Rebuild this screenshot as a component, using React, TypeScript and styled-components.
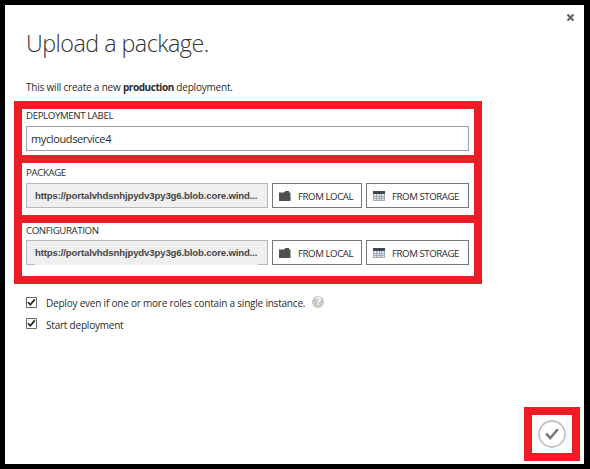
import React from "react";
import styled, { createGlobalStyle } from "styled-components";

const RED = "#ee1c24";

const GlobalStyle = createGlobalStyle`
  *, *::before, *::after { box-sizing: border-box; }
  body { margin: 0; background: #000; overflow: hidden; }
  button, input { margin: 0; font: inherit; color: inherit; letter-spacing: inherit; }
`;

const Dialog = styled.main`
  position: relative;
  width: 590px;
  height: 469px;
  padding: 22px 4px 0 21px;
  border: solid #000;
  border-width: 5px 6px 5px 5px;
  display: flex;
  flex-direction: column;
  background: #fff;
  color: #2b2b2b;
  font: 400 10px/12px "Open Sans", sans-serif;
  white-space: nowrap;
`;

const CloseButton = styled.button`
  position: absolute;
  top: 8px;
  right: 9px;
  width: 9px;
  height: 9px;
  padding: 0;
  border: 0;
  background: none;
  svg { display: block; }
`;

const Title = styled.h1`
  margin: 0 0 21px;
  font-size: 23.3px;
  font-weight: 300;
  line-height: 32px;
  letter-spacing: -0.52px;
  color: #333;
`;

const Intro = styled.p`
  margin: 0 0 7px;
  line-height: 14px;
  letter-spacing: -0.2px;
`;

const Strong = styled.strong`
  font-weight: 700;
  letter-spacing: -0.43px;
`;

const Sections = styled.div`
  width: 468px;
  height: 183px;
  margin-left: -12px;
  padding: 8px;
  display: grid;
  grid-template-rows: 46px 52px 53px;
  row-gap: 8px;
  background: ${RED};
`;

const Section = styled.section<{ $top: number; $gap: number }>`
  padding: ${(p) => p.$top}px 5px 0 4px;
  display: flex;
  flex-direction: column;
  gap: ${(p) => p.$gap}px;
  background: #fff;
`;

const Label = styled.label`
  height: 12px;
  font-size: 9.7px;
  line-height: 13px;
  letter-spacing: -0.39px;
`;

const TextInput = styled.input`
  width: 100%;
  height: 25px;
  padding: 0 4px;
  border: 1px solid #a0a0a0;
  border-radius: 0;
  background: #fff;
  font-size: 11px;
  letter-spacing: -0.38px;
  outline: none;
`;

const FileRow = styled.div`
  display: flex;
  height: 25px;
  gap: 4px;
`;

const FilePath = styled.div<{ $openBottom?: boolean }>`
  position: relative;
  width: 242px;
  padding: 0 8px;
  border: 1px solid #b8b8b8;
  background: #efefef;
  color: #444;
  font: 700 9.6px/23px "Liberation Sans", sans-serif;
  letter-spacing: -0.14px;

  &::after {
    content: "";
    display: ${(p) => (p.$openBottom ? "block" : "none")};
    position: absolute;
    left: 8px;
    right: 9px;
    bottom: -1px;
    height: 1px;
    background: #efefef;
  }
`;

const SourceButton = styled.button<{ $width: number }>`
  width: ${(p) => p.$width}px;
  padding: 2px 0 0 6px;
  display: flex;
  align-items: center;
  gap: 7px;
  border: 1px solid #777;
  background: #fff;
  font-size: 9.7px;
  letter-spacing: -0.45px;
  svg { flex: none; margin-top: -1px; }
`;

const Options = styled.div`
  margin-top: 13px;
  display: flex;
  flex-direction: column;
  gap: 10px;
`;

const Option = styled.label`
  height: 11px;
  display: flex;
  align-items: center;
  gap: 9px;
  letter-spacing: -0.21px;
`;

const OptionText = styled.span<{ $drop?: boolean }>`
  padding-top: ${(p) => (p.$drop ? 2 : 0)}px;
`;

const CheckBox = styled.span`
  width: 11px;
  height: 11px;
  flex: none;
  svg { display: block; }
`;

const Help = styled.span`
  width: 12px;
  height: 12px;
  margin: -2px 0 0 -2px;
  display: grid;
  place-items: center;
  border-radius: 50%;
  background: #c8c8c8;
  color: #fff;
  font: 700 10px/12px "Liberation Sans", sans-serif;
  letter-spacing: 0;
`;

const Footer = styled.footer`
  margin-top: auto;
  margin-bottom: 3px;
  display: flex;
  justify-content: flex-end;
`;

const SubmitFrame = styled.div`
  width: 56px;
  height: 54px;
  border: 8px solid ${RED};
  display: grid;
  place-items: center;
`;

const SubmitButton = styled.button`
  width: 28px;
  height: 28px;
  padding: 0;
  border: 0;
  background: none;
  svg { display: block; }
`;

const CloseIcon = () => (
  <svg width="9" height="9" viewBox="0 0 9 9">
    <path d="M1.5 1.5 7.5 7.5M7.5 1.5 1.5 7.5" stroke="#666" strokeWidth="2.2" />
  </svg>
);

const FolderIcon = () => (
  <svg width="12" height="10" viewBox="0 0 12 10">
    <path d="M0 1.5h5L6.5 0H10v1.5h1.5V10H0z" fill="#505050" />
  </svg>
);

const TableIcon = () => (
  <svg width="12" height="10" viewBox="0 0 12 10">
    <path d="M0 0h12v10H0z" fill="#a3abb8" />
    <path d="M0 0h12v3H0z" fill="#3c4654" />
    <path
      d="M1 3h2v2H1zm3 0h2v2H4zm3 0h1v2H7zm2 0h2v2H9zM1 6h2v1H1zm3 0h2v1H4zm3 0h1v1H7zm2 0h2v1H9zM1 8h2v1H1zm3 0h2v1H4zm3 0h1v1H7zm2 0h2v1H9z"
      fill="#e4e8ed"
    />
  </svg>
);

const CheckIcon = () => (
  <svg width="11" height="11" viewBox="0 0 11 11">
    <path d="M.5.5h10v10H.5z" fill="#fff" stroke="#666" />
    <path d="M2 5.2 4.3 7.8 8.8 2.4" fill="none" stroke="#222" strokeWidth="1.7" />
  </svg>
);

const SubmitIcon = () => (
  <svg width="28" height="28" viewBox="0 0 28 28">
    <circle cx="14" cy="14" r="13" fill="#fff" stroke="#c4c4c4" strokeWidth="1.8" />
    <path d="M8.2 13.6 12.3 18 19.8 9.2" fill="none" stroke="#777" strokeWidth="2.5" />
  </svg>
);

interface FileFieldProps {
  label: string;
  top: number;
  gap: number;
  openBottom?: boolean;
}

function FileField({ label, top, gap, openBottom }: FileFieldProps) {
  return (
    <Section $top={top} $gap={gap}>
      <Label as="div">{label}</Label>
      <FileRow>
        <FilePath $openBottom={openBottom}>https://portalvhdsnhjpydv3py3g6.blob.core.wind...</FilePath>
        <SourceButton $width={90}>
          <FolderIcon />
          FROM LOCAL
        </SourceButton>
        <SourceButton $width={103}>
          <TableIcon />
          FROM STORAGE
        </SourceButton>
      </FileRow>
    </Section>
  );
}

export default function App() {
  return (
    <>
      <GlobalStyle />
      <Dialog>
        <CloseButton aria-label="Close">
          <CloseIcon />
        </CloseButton>
        <Title>Upload a package.</Title>
        <Intro>
          This will create a new <Strong>production</Strong> deployment.
        </Intro>
        <Sections>
          <Section $top={0} $gap={5}>
            <Label htmlFor="deployment-label">DEPLOYMENT LABEL</Label>
            <TextInput id="deployment-label" defaultValue="mycloudservice4" />
          </Section>
          <FileField label="PACKAGE" top={3} gap={5} />
          <FileField label="CONFIGURATION" top={1} gap={4} openBottom />
        </Sections>
        <Options>
          <Option>
            <CheckBox><CheckIcon /></CheckBox>
            <OptionText>Deploy even if one or more roles contain a single instance.</OptionText>
            <Help>?</Help>
          </Option>
          <Option>
            <CheckBox><CheckIcon /></CheckBox>
            <OptionText $drop>Start deployment</OptionText>
          </Option>
        </Options>
        <Footer>
          <SubmitFrame>
            <SubmitButton aria-label="Complete">
              <SubmitIcon />
            </SubmitButton>
          </SubmitFrame>
        </Footer>
      </Dialog>
    </>
  );
}
